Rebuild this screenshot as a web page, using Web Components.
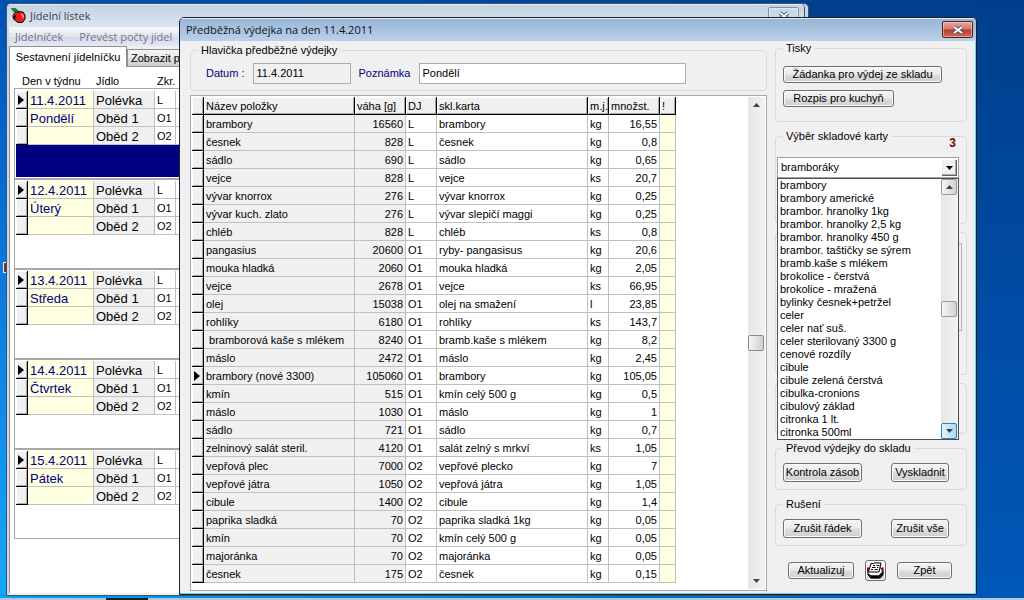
<!DOCTYPE html>
<html lang="cs">
<head>
<meta charset="utf-8">
<title>Jídelní lístek</title>
<style>
  html, body {
    height: 100%;
    margin: 0;
    overflow: hidden;
    font: 11px/13px "Liberation Sans", Arial, sans-serif;
    color: #000;
  }
</style>
</head>
<body>
<desk-top></desk-top>

<script>
const BUTTON_FACE = 'linear-gradient(#f4f4f4, #ebebeb 48%, #dcdcdc 52%, #cfcfcf)';

/**
 * Base class, renders the string from _template() into an open shadow root.
 */
class BaseElement extends HTMLElement {
  constructor() {
    super();
    this._shadowRoot = this.attachShadow({ mode: 'open' });
  }

  connectedCallback() {
    this._shadowRoot.innerHTML = this._template();
  }
}

/**
 * # Window frame
 * caption: title text, slots: icon, default. "inactive" fades the frame.
 */
class DeskWindow extends BaseElement {
  _template() {
    return `
    <style>
      :host {
        display: flex;
        flex-direction: column;
        box-sizing: border-box;
        border: 1px solid #14202c;
        border-radius: 5px 5px 0 0;
        background: #f0f0f0;
        box-shadow: inset -1px -1px #6fd3ea;
        overflow: hidden;
      }
      :host([inactive]) {
        border-color: #3c556c;
        box-shadow: inset 2px 0 #c9d8e8, inset -3px 0 #c9d8e8;
      }
      header {
        display: flex;
        align-items: center;
        gap: 4px;
        flex: none;
        height: 23px;
        padding: 0 3px 0 6px;
        background: linear-gradient(#98b4d4, #b9d1ea);
        box-shadow: inset 0 1px #e4eef8;
        font: 11px/16px "Open Sans", "Noto Sans", sans-serif;
        color: #0c1420;
      }
      :host([inactive]) header {
        padding: 0 5px 0 4px;
        background: linear-gradient(#c3d2e2, #dbe5f0);
        color: #38424e;
      }
      h1 { flex: 1; margin: 0; font: inherit; }
      button {
        display: flex;
        align-items: center;
        justify-content: center;
        width: 31px;
        height: 17px;
        padding: 0;
        border: 1px solid #5c1a1a;
        border-radius: 2px;
        background: linear-gradient(#e5a79c, #d47a6c 48%, #b93a28 52%, #cf6a54);
        box-shadow: inset 0 0 0 1px rgba(255, 255, 255, .4);
      }
      :host([inactive]) button {
        border-color: #8292a4;
        background: #cbd8e6;
      }
      main { flex: 1; display: flex; flex-direction: column; min-height: 0; }
    </style>
    <header>
      <slot name="icon"></slot>
      <h1>${this.getAttribute('caption')}</h1>
      <button type="button" aria-label="Zavřít">
        <svg width="12" height="10" viewBox="0 0 12 10">
          <path d="M2 2l8 6M10 2l-8 6" stroke="#4c5664" stroke-width="4"/>
          <path d="M2 2l8 6M10 2l-8 6" stroke="#fff" stroke-width="2"/>
        </svg>
      </button>
    </header>
    <main><slot></slot></main>`;
  }
}

/** # Push button */
class PushButton extends BaseElement {
  _template() {
    return `
    <style>
      :host { display: inline-flex; }
      button {
        display: flex;
        align-items: center;
        justify-content: center;
        width: 100%;
        height: var(--button-height, 17px);
        padding: 0;
        border: 1px solid #707070;
        border-radius: 3px;
        background: ${BUTTON_FACE};
        box-shadow: inset 0 0 0 1px #fafafa;
        font: inherit;
        color: inherit;
        white-space: nowrap;
      }
    </style>
    <button type="button" aria-label="${this.getAttribute('label') || this.textContent}"><slot></slot></button>`;
  }
}

/** # Group box with an optional caption */
class GroupBox extends BaseElement {
  _template() {
    const caption = this.getAttribute('caption');
    return `
    <style>
      :host { display: block; }
      fieldset {
        box-sizing: border-box;
        height: 100%;
        min-width: 0;
        margin: 0;
        padding: 0 7px;
        border: 1px solid #d3dce3;
        border-radius: 4px;
      }
      legend { padding: 0 3px; height: 13px; }
    </style>
    <fieldset>${caption ? `<legend>${caption}</legend>` : ''}<slot></slot></fieldset>`;
  }
}

/** # Vertical scroll bar, "hot" highlights the lower arrow, "framed" draws arrow buttons */
class ScrollBar extends BaseElement {
  _template() {
    return `
    <style>
      :host {
        display: flex;
        flex-direction: column;
        flex: none;
        width: 17px;
        background: linear-gradient(90deg, #e6e6e6, #f2f2f2);
      }
      button {
        box-sizing: border-box;
        display: flex;
        align-items: center;
        justify-content: center;
        width: 16px;
        height: 16px;
        padding: 0;
        border: 1px solid transparent;
        border-radius: 2px;
        background: none;
      }
      i { flex: 1; }
      .thumb {
        border-color: #8c8c8c;
        background: linear-gradient(90deg, #f6f6f6, #cfcfcf);
      }
      :host([framed]) button { border-color: #9a9a9a; background: linear-gradient(90deg, #f6f6f6, #d2d2d2); }
      :host([hot]) .down { border-color: #3c7fb1; background: linear-gradient(90deg, #e3f4fc, #a9dbf5); }
    </style>
    <button type="button" aria-label="Nahoru"><svg width="7" height="4" viewBox="0 0 14 8"><path d="M0 8L7 0L14 8z" fill="#444"/></svg></button>
    <i></i><button type="button" class="thumb" aria-label="Posuvník"></button><i></i>
    <button type="button" class="down" aria-label="Dolů"><svg width="7" height="4" viewBox="0 0 14 8"><path d="M0 0L7 8L14 0z" fill="#444"/></svg></button>`;
  }
}

const MARKER = '<svg width="6" height="10"><path d="M0 0L6 5L0 10z"/></svg>';

// Raised look shared by the row selectors of both grids
const SELECTOR_STYLE = `
  .sel {
    padding: 0 0 0 2px;
    border-right: 1px solid #000;
    border-bottom: 1px solid #000;
    background: #f0f0f0;
    box-shadow: inset 1px 1px #fff, inset -1px -1px #a8a8a8;
  }
  .sel svg { display: block; }`;

/** # Items of the issue slip */
class IssueGrid extends BaseElement {
  get rows() {
    return [
      ['brambory', '16560', 'L', 'brambory', 'kg', '16,55'],
      ['česnek', '828', 'L', 'česnek', 'kg', '0,8'],
      ['sádlo', '690', 'L', 'sádlo', 'kg', '0,65'],
      ['vejce', '828', 'L', 'vejce', 'ks', '20,7'],
      ['vývar knorrox', '276', 'L', 'vývar knorrox', 'kg', '0,25'],
      ['vývar kuch. zlato', '276', 'L', 'vývar slepičí maggi', 'kg', '0,25'],
      ['chléb', '828', 'L', 'chléb', 'ks', '0,8'],
      ['pangasius', '20600', 'O1', 'ryby- pangasisus', 'kg', '20,6'],
      ['mouka hladká', '2060', 'O1', 'mouka hladká', 'kg', '2,05'],
      ['vejce', '2678', 'O1', 'vejce', 'ks', '66,95'],
      ['olej', '15038', 'O1', 'olej na smažení', 'l', '23,85'],
      ['rohlíky', '6180', 'O1', 'rohlíky', 'ks', '143,7'],
      ['&nbsp;bramborová kaše s mlékem', '8240', 'O1', 'bramb.kaše s mlékem', 'kg', '8,2'],
      ['máslo', '2472', 'O1', 'máslo', 'kg', '2,45'],
      ['brambory (nové 3300)', '105060', 'O1', 'brambory', 'kg', '105,05'],
      ['kmín', '515', 'O1', 'kmín celý 500 g', 'kg', '0,5'],
      ['máslo', '1030', 'O1', 'máslo', 'kg', '1'],
      ['sádlo', '721', 'O1', 'sádlo', 'kg', '0,7'],
      ['zelninový salát steril.', '4120', 'O1', 'salát zelný s mrkví', 'ks', '1,05'],
      ['vepřová plec', '7000', 'O2', 'vepřové plecko', 'kg', '7'],
      ['vepřové játra', '1050', 'O2', 'vepřová játra', 'kg', '1,05'],
      ['cibule', '1400', 'O2', 'cibule', 'kg', '1,4'],
      ['paprika sladká', '70', 'O2', 'paprika sladká 1kg', 'kg', '0,05'],
      ['kmín', '70', 'O2', 'kmín celý 500 g', 'kg', '0,05'],
      ['majoránka', '70', 'O2', 'majoránka', 'kg', '0,05'],
      ['česnek', '175', 'O2', 'česnek', 'kg', '0,15'],
    ];
  }

  _row(row, i) {
    const [name, weight, meal, card, unit, amount] = row;
    return `<tr>
      <td class="sel">${i === 14 ? MARKER : ''}</td>
      <td class="ro">${name}</td><td class="ro num">${weight}</td><td>${meal}</td>
      <td>${card}</td><td>${unit}</td><td class="num">${amount}</td><td class="flag"></td>
    </tr>`;
  }

  _template() {
    const widths = [12, 151, 51, 31, 151, 21, 51, 16];
    const heads = ['', 'Název položky', 'váha [g]', 'DJ', 'skl.karta', 'm.j.', 'množst.', '!'];
    return `
    <style>
      :host {
        display: flex;
        justify-content: space-between;
        padding: 1px;
        border: 1px solid #a4a8ae;
        background: #fff;
        overflow: hidden;
      }
      table { align-self: flex-start; width: 484px; table-layout: fixed; border-collapse: separate; border-spacing: 0; }
      th, td {
        box-sizing: border-box;
        height: 18px;
        padding: 2px 2px 0;
        border-right: 1px solid #c0c0c0;
        border-bottom: 1px solid #c0c0c0;
        line-height: 13px;
        text-align: left;
        font-weight: normal;
        white-space: nowrap;
      }
      th {
        border-color: #000;
        background: #f0f0f0;
        box-shadow: inset 1px 1px #fff, inset -1px -1px #a8a8a8;
      }
      .ro { background: #f0f0f0; }
      .num { text-align: right; }
      .flag { background: #ffffe1; }
      ${SELECTOR_STYLE}
    </style>
    <table>
      <colgroup>${widths.map(w => `<col style="width:${w}px">`).join('')}</colgroup>
      <thead><tr>${heads.map(h => `<th>${h}</th>`).join('')}</tr></thead>
      <tbody>${this.rows.map(this._row).join('')}</tbody>
    </table>
    <scroll-bar></scroll-bar>`;
  }
}

/** # Menu of one day: date, day, "selected" paints the free area */
class DayMenu extends BaseElement {
  _template() {
    const rows = [
      [this.getAttribute('date'), 'Polévka', 'L'],
      [this.getAttribute('day'), 'Oběd 1', 'O1'],
      ['', 'Oběd 2', 'O2'],
    ];
    return `
    <style>
      :host {
        display: block;
        box-sizing: border-box;
        height: 90px;
        padding: 1px 1px 1px;
        border: 1px solid #a8a8a8;
        border-top-width: 2px;
        border-bottom: 0;
        background: #fff;
      }
      :host([selected]) { border-top-width: 1px; padding-top: 2px; background: #000080 content-box; }
      table { width: 100%; table-layout: fixed; border-collapse: separate; border-spacing: 0; background: #fff; }
      td {
        box-sizing: border-box;
        height: 18px;
        padding: 0 2px;
        border-right: 1px solid #c0c0c0;
        border-bottom: 1px solid #c0c0c0;
        white-space: nowrap;
        line-height: 14px;
      }
      .date, .food { padding-top: 3px; font-size: 13px; }
      .date { background: #ffffe1; color: #000080; }
      .food { background: #f0f0f0; }
      ${SELECTOR_STYLE}
    </style>
    <table>
      <colgroup><col style="width:12px"><col style="width:66px"><col style="width:61px"><col style="width:21px"><col></colgroup>
      ${rows.map(([date, food, code], i) => `<tr>
        <td class="sel">${i ? '' : MARKER}</td><td class="date">${date}</td>
        <td class="food">${food}</td><td>${code}</td><td></td>
      </tr>`).join('')}
    </table>`;
  }
}

/** # Stock card picker, drawn with its list open */
class CardPicker extends BaseElement {
  _template() {
    const cards = ['brambory', 'brambory americké', 'brambor. hranolky 1kg', 'brambor. hranolky 2,5 kg',
      'brambor. hranolky 450 g', 'brambor. taštičky se sýrem', 'bramb.kaše s mlékem', 'brokolice - čerstvá',
      'brokolice - mražená', 'bylinky česnek+petržel', 'celer', 'celer nať suš.', 'celer sterilovaný 3300 g',
      'cenové rozdíly', 'cibule', 'cibule zelená čerstvá', 'cibulka-cronions', 'cibulový základ',
      'citronka 1 lt.', 'citronka 500ml'];
    return `
    <style>
      :host { display: block; position: relative; }
      .box {
        display: flex;
        align-items: center;
        height: 19px;
        border: 1px solid #a0a0a0;
        background: #fff;
      }
      select {
        flex: 1;
        height: 19px;
        padding: 0 3px;
        border: 0;
        appearance: none;
        background: none;
        font: inherit;
        color: inherit;
      }
      .arrow {
        display: flex;
        align-items: center;
        justify-content: center;
        width: 16px;
        height: 17px;
        margin-right: 1px;
        background: #f0f0f0;
        box-shadow: inset 1px 1px #fff, inset -1px -1px #606060, inset -2px -2px #b0b0b0;
      }
      .list {
        position: absolute;
        z-index: 1;
        top: 100%;
        left: 0;
        right: 0;
        display: flex;
        border: 1px solid #505050;
        background: #fff;
      }
      ul { flex: 1; margin: 0; padding: 0 2px; list-style: none; white-space: nowrap; }
    </style>
    <div class="box">
      <select aria-label="Výběr skladové karty"><option>bramboráky</option></select>
      <span class="arrow"><svg width="7" height="4" viewBox="0 0 14 8"><path d="M0 0L7 8L14 0z"/></svg></span>
    </div>
    <div class="list">
      <ul role="listbox">${cards.map(c => `<li role="option">${c}</li>`).join('')}</ul>
      <scroll-bar framed hot></scroll-bar>
    </div>`;
  }
}

/** # Week menu page of the main window */
class WeekMenu extends BaseElement {
  _template() {
    return `
    <style>
      :host { display: flex; flex-direction: column; flex: 1; padding: 0 4px 2px 2px; }
      nav {
        display: flex;
        gap: 16px;
        padding: 1px 6px 0;
        height: 18px;
        background: linear-gradient(#f6f8fc, #dfe5f1 50%, #d3daea 55%, #e4e9f5);
        font: 11px/17px "Open Sans", "Noto Sans", sans-serif;
      }
      nav a { color: #707680; text-decoration: none; }
      .tabs { display: flex; align-items: flex-end; height: 21px; }
      .tabs button {
        box-sizing: border-box;
        height: 18px;
        padding: 0 3px;
        border: 1px solid #909090;
        background: ${BUTTON_FACE};
        font: inherit;
        color: inherit;
      }
      .tabs button[aria-selected=true] {
        width: 118px;
        height: 21px;
        padding: 0;
        border-bottom: 0;
        background: #fff;
      }
      .page { flex: 1; padding: 8px 4px; border-left: 1px solid #909090; background: #fff; }
      .heads { display: flex; padding-left: 8px; }
      .heads span { width: 61px; }
      .heads span:first-child { width: 74px; }
      .week { border-bottom: 1px solid #a8a8a8; }
    </style>
    <nav><a href="#menu">Jídelníček</a><a href="#counts">Převést počty jídel</a></nav>
    <div class="tabs" role="tablist">
      <button type="button" role="tab" aria-selected="true">Sestavnení jídelníčku</button>
      <button type="button" role="tab">Zobrazit p</button>
    </div>
    <div class="page">
      <div class="heads"><span>Den v týdnu</span><span>Jídlo</span><span>Zkr.</span></div>
      <div class="week">
        <day-menu date="11.4.2011" day="Pondělí" selected></day-menu>
        <day-menu date="12.4.2011" day="Úterý"></day-menu>
        <day-menu date="13.4.2011" day="Středa"></day-menu>
        <day-menu date="14.4.2011" day="Čtvrtek"></day-menu>
        <day-menu date="15.4.2011" day="Pátek"></day-menu>
      </div>
    </div>`;
  }
}

/** # Content of the issue slip dialog */
class IssueSlip extends BaseElement {
  _template() {
    return `
    <style>
      :host { display: flex; flex: 1; gap: 8px; min-height: 0; padding: 1px 9px 3px 10px; }
      .left { flex: 1; display: flex; flex-direction: column; gap: 4px; padding-top: 2px; min-width: 0; }
      .fields { display: flex; align-items: center; gap: 8px; padding: 6px 8px; }
      label { color: #000080; }
      input {
        box-sizing: border-box;
        width: 98px;
        height: 21px;
        padding: 0 3px 2px;
        border: 1px solid #a8acb2;
        background: #fff;
        font: inherit;
        color: inherit;
      }
      input[readonly] { background: #f0f0f0; }
      #note { width: 267px; }
      issue-grid { flex: 1; }
      .side { display: flex; flex-direction: column; gap: 8px; width: 192px; }
      .prints { display: flex; flex-direction: column; align-items: flex-start; gap: 7px; padding: 11px 0 14px; }
      .prints push-button:first-child { width: 159px; }
      .prints push-button { width: 111px; }
      .pick { height: 86px; margin: -6px 0 0 -6px; }
      .count { display: block; padding: 0 3px 7px; text-align: right; font: bold 12px/13px "Liberation Sans", sans-serif; color: #800000; }
      .under { height: 143px; }
      .under div { height: 86px; margin: 10px -3px 0; border: 1px solid #b0b0b0; }
      .spare { height: 51px; }
      .pair { display: flex; justify-content: space-between; padding: 8px 10px 7px 0; --button-height: 19px; }
      .pair push-button { width: 79px; }
      .pair push-button + push-button { width: 58px; }
      .foot { display: flex; align-items: center; gap: 11px; padding: 6px 13px 0; }
      .foot push-button { width: 66px; }
      .foot .print { width: 21px; --button-height: 21px; }
      .foot push-button:last-child { width: 55px; }
    </style>
    <div class="left">
      <group-box caption="Hlavička předběžné výdejky">
        <div class="fields">
          <label for="date">Datum :</label><input id="date" value="11.4.2011" readonly>
          <label for="note">Poznámka</label><input id="note" value="Pondělí">
        </div>
      </group-box>
      <issue-grid></issue-grid>
    </div>
    <div class="side">
      <group-box caption="Tisky">
        <div class="prints">
          <push-button>Žádanka pro výdej ze skladu</push-button>
          <push-button>Rozpis pro kuchyň</push-button>
        </div>
      </group-box>
      <group-box caption="Výběr skladové karty">
        <div class="pick"><b class="count">3</b><card-picker></card-picker></div>
      </group-box>
      <group-box class="under"><div></div></group-box>
      <group-box class="spare"></group-box>
      <group-box caption="Převod výdejky do skladu">
        <div class="pair"><push-button>Kontrola zásob</push-button><push-button>Vyskladnit</push-button></div>
      </group-box>
      <group-box caption="Rušení">
        <div class="pair"><push-button>Zrušit řádek</push-button><push-button>Zrušit vše</push-button></div>
      </group-box>
      <div class="foot">
        <push-button>Aktualizuj</push-button>
        <push-button class="print" label="Tisk">
          <svg width="17" height="17" viewBox="0 0 34 34">
            <path d="M2 16l4-4h22l4 4v8l-6 8H8l-6-6z" fill="#fff" stroke="#000" stroke-width="2"/>
            <path d="M2 24l6 4h16l8-8M6 31h20l6-7" fill="none" stroke="#000" stroke-width="3"/>
            <path d="M8 3h5l2-1h13l-4 18H3z" fill="#fff" stroke="#000" stroke-width="2"/>
            <path d="M12 7h4m3 0h6M10 11h7m3 0h3M8 15h4m3 0h7" stroke="#000" stroke-width="2"/>
            <path d="M2 11v8M31 11v8" stroke="#8c0014" stroke-width="4"/>
          </svg>
        </push-button>
        <push-button>Zpět</push-button>
      </div>
    </div>`;
  }
}

/** # Desktop with its windows */
class DeskTop extends BaseElement {
  _template() {
    return `
    <style>
      :host {
        display: flex;
        flex-direction: column;
        height: 100%;
        background:
          linear-gradient(90deg, #109cf0, rgba(16, 156, 240, 0) 90%) bottom / 100% 6px no-repeat,
          linear-gradient(90deg, transparent 12px, #0052b0 12px, transparent 90%) top / 100% 3px no-repeat,
          linear-gradient(#0050b4, #0a78dc 45%, #18a8f8) left / 12px 100% no-repeat,
          linear-gradient(185deg, #003f8c, #004ca4 45%, #005cbe);
      }
      .area { position: relative; flex: 1; }
      .area > * { position: absolute; }
      .back { inset: 3px 215px 3px 300px; border: 1px solid #3c556c; border-radius: 5px; background: #c9d8e8; }
      .shortcut { left: 3px; top: 262px; width: 6px; height: 9px; border: 1px solid #eee; background: #703030; }
      .main { inset: 3px 219px 2px 6px; }
      .slip { inset: 17px 47px 3px 179px; }
      footer { display: flex; height: 2px; padding-left: 106px; background: #a9cbe4; }
      footer i { width: 42px; background: #10242c; }
    </style>
    <div class="area">
      <div class="back"></div>
      <div class="shortcut"></div>
      <desk-window class="main" caption="Jídelní lístek" inactive>
        <svg slot="icon" width="15" height="16" viewBox="0 0 30 32">
          <path d="M8 9l8-2 8 1 4 6v8l-5 7h-9l-7-5-1-5 4-3-5-3z" fill="#e41c1c" stroke="#280000" stroke-width="2"/>
          <path d="M3 14l6 2 2 3-5 2-2 3z" fill="#280000"/>
          <path d="M14 10L11 4" stroke="#102810" stroke-width="3"/>
          <path d="M1 1l8 0 6 5-4 3-6-2z" fill="#1c8034" stroke="#0c3818"/>
          <path d="M20 12l4 3v5" stroke="#ffa8a8" stroke-width="3" fill="none"/>
        </svg>
        <week-menu></week-menu>
      </desk-window>
      <desk-window class="slip" caption="Předběžná výdejka na den 11.4.2011">
        <issue-slip></issue-slip>
      </desk-window>
    </div>
    <footer><i></i></footer>`;
  }
}

customElements.define('push-button', PushButton);
customElements.define('group-box', GroupBox);
customElements.define('scroll-bar', ScrollBar);
customElements.define('issue-grid', IssueGrid);
customElements.define('day-menu', DayMenu);
customElements.define('card-picker', CardPicker);
customElements.define('week-menu', WeekMenu);
customElements.define('issue-slip', IssueSlip);
customElements.define('desk-window', DeskWindow);
customElements.define('desk-top', DeskTop);
</script>
</body>
</html>
